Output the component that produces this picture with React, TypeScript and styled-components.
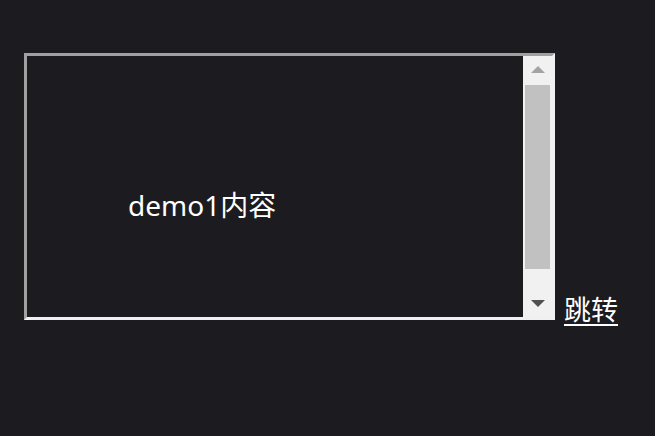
import styled, { createGlobalStyle } from "styled-components";

const GlobalStyle = createGlobalStyle`
  html, body {
    margin: 0;
    background: #1c1b20;
  }
  body {
    font-family: "Noto Sans", "Noto Sans CJK SC", sans-serif;
    color: #ffffff;
  }
`;

const Page = styled.div`
  padding: 53px 0 0 24px;
  font-size: 27px;
  line-height: 1.2;
`;

const Frame = styled.div`
  display: inline-block;
  box-sizing: border-box;
  width: 531px;
  height: 267px;
  overflow: hidden;
  vertical-align: baseline;
  border-style: solid;
  border-width: 3px;
  border-color: #a0a0a0 #f0f0f0 #f0f0f0 #a0a0a0;
`;

const FrameBody = styled.div`
  display: flex;
  height: 100%;
`;

const Content = styled.div`
  flex: 1;
  padding: 131px 0 0 101px;
  font-size: 28px;
  line-height: 36px;
  color: #ffffff;
`;

const Scrollbar = styled.div`
  width: 29px;
  display: flex;
  flex-direction: column;
  background: #f1f1f1;
`;

const ArrowButton = styled.div`
  height: 29px;
  display: flex;
  align-items: center;
  justify-content: center;
`;

const Arrow = styled.div<{ $dir: "up" | "down"; $color: string }>`
  width: 0;
  height: 0;
  border-left: 7px solid transparent;
  border-right: 7px solid transparent;
  ${(p) =>
    p.$dir === "up"
      ? `border-bottom: 7px solid ${p.$color}; margin-top: -2px;`
      : `border-top: 7px solid ${p.$color}; margin-top: 2px;`}
`;

const Track = styled.div`
  flex: 1;
  padding: 0 2px;
`;

const Thumb = styled.div`
  height: 184px;
  background: #c1c1c1;
`;

const JumpLink = styled.a`
  margin-left: 9px;
  font-size: 27px;
  color: #ffffff;
  text-decoration: underline;
  text-underline-offset: 4px;
  cursor: pointer;
`;

export default function App() {
  return (
    <Page>
      <GlobalStyle />
      <Frame>
        <FrameBody>
          <Content>demo1内容</Content>
          <Scrollbar>
            <ArrowButton>
              <Arrow $dir="up" $color="#a3a3a3" />
            </ArrowButton>
            <Track>
              <Thumb />
            </Track>
            <ArrowButton>
              <Arrow $dir="down" $color="#505050" />
            </ArrowButton>
          </Scrollbar>
        </FrameBody>
      </Frame>
      <JumpLink href="#">跳转</JumpLink>
    </Page>
  );
}
